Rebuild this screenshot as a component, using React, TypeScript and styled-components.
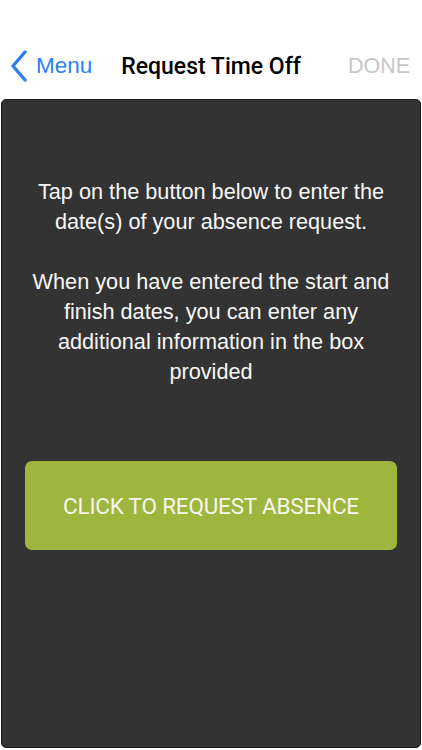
import React, { FC } from 'react'
import styled, { createGlobalStyle } from 'styled-components'

const Global = createGlobalStyle`
    html, body {
        margin: 0;
        padding: 0;
        background: #ffffff;
    }
    body {
        font-family: "Liberation Sans", Arial, sans-serif;
    }
`;

const Screen = styled.div`
    width: 422px;
    height: 750px;
    display: flex;
    flex-direction: column;
    background: #ffffff;
    overflow: hidden;
`;

const NavBar = styled.div`
    height: 99px;
    flex-shrink: 0;
    display: flex;
    align-items: center;
    padding: 33px 12px 0 10px;
    box-sizing: border-box;
`;

const BackButton = styled.div`
    display: flex;
    align-items: center;
    gap: 9px;
    color: #2d7ff0;
    font-size: 22.5px;
`;

const Title = styled.div`
    flex: 1;
    text-align: center;
    font-size: 23px;
    font-weight: 500;
    color: #000;
    font-family: Roboto, "Liberation Sans", sans-serif;
    padding-right: 18px;
`;

const Done = styled.div`
    color: #c8c8c8;
    font-size: 21.5px;
`;

const Panel = styled.div`
    flex: 1;
    margin: 0 1px 2px;
    background: #333333;
    border: 1px solid #1c1c1c;
    border-radius: 5px;
    display: flex;
    flex-direction: column;
    align-items: center;
    padding: 77px 20px 0;
`;

const Message = styled.p`
    margin: 0 0 30px;
    color: #f7f7f7;
    font-size: 21.7px;
    line-height: 30px;
    text-align: center;
`;

const RequestButton = styled.button`
    margin-top: 44px;
    width: 372px;
    height: 89px;
    border: none;
    border-radius: 7px;
    background: #9eb53e;
    color: #f6f6ee;
    font-family: Roboto, "Liberation Sans", sans-serif;
    font-size: 22.5px;
    letter-spacing: -0.2px;
`;

const Chevron: FC = () => (
    <svg width="17" height="32" viewBox="0 0 17 32">
        <path d="M15 2 L3 16 L15 30" fill="none" stroke="#2d7ff0" strokeWidth="3.4" strokeLinecap="round" strokeLinejoin="round" />
    </svg>
);

const App: FC = () => {
    return (
        <Screen>
            <Global />
            <NavBar>
                <BackButton>
                    <Chevron />
                    Menu
                </BackButton>
                <Title>Request Time Off</Title>
                <Done>DONE</Done>
            </NavBar>
            <Panel>
                <Message>Tap on the button below to enter the date(s) of your absence request.</Message>
                <Message>When you have entered the start and finish dates, you can enter any additional information in the box provided</Message>
                <RequestButton>CLICK TO REQUEST ABSENCE</RequestButton>
            </Panel>
        </Screen>
    )
}

export default App;
